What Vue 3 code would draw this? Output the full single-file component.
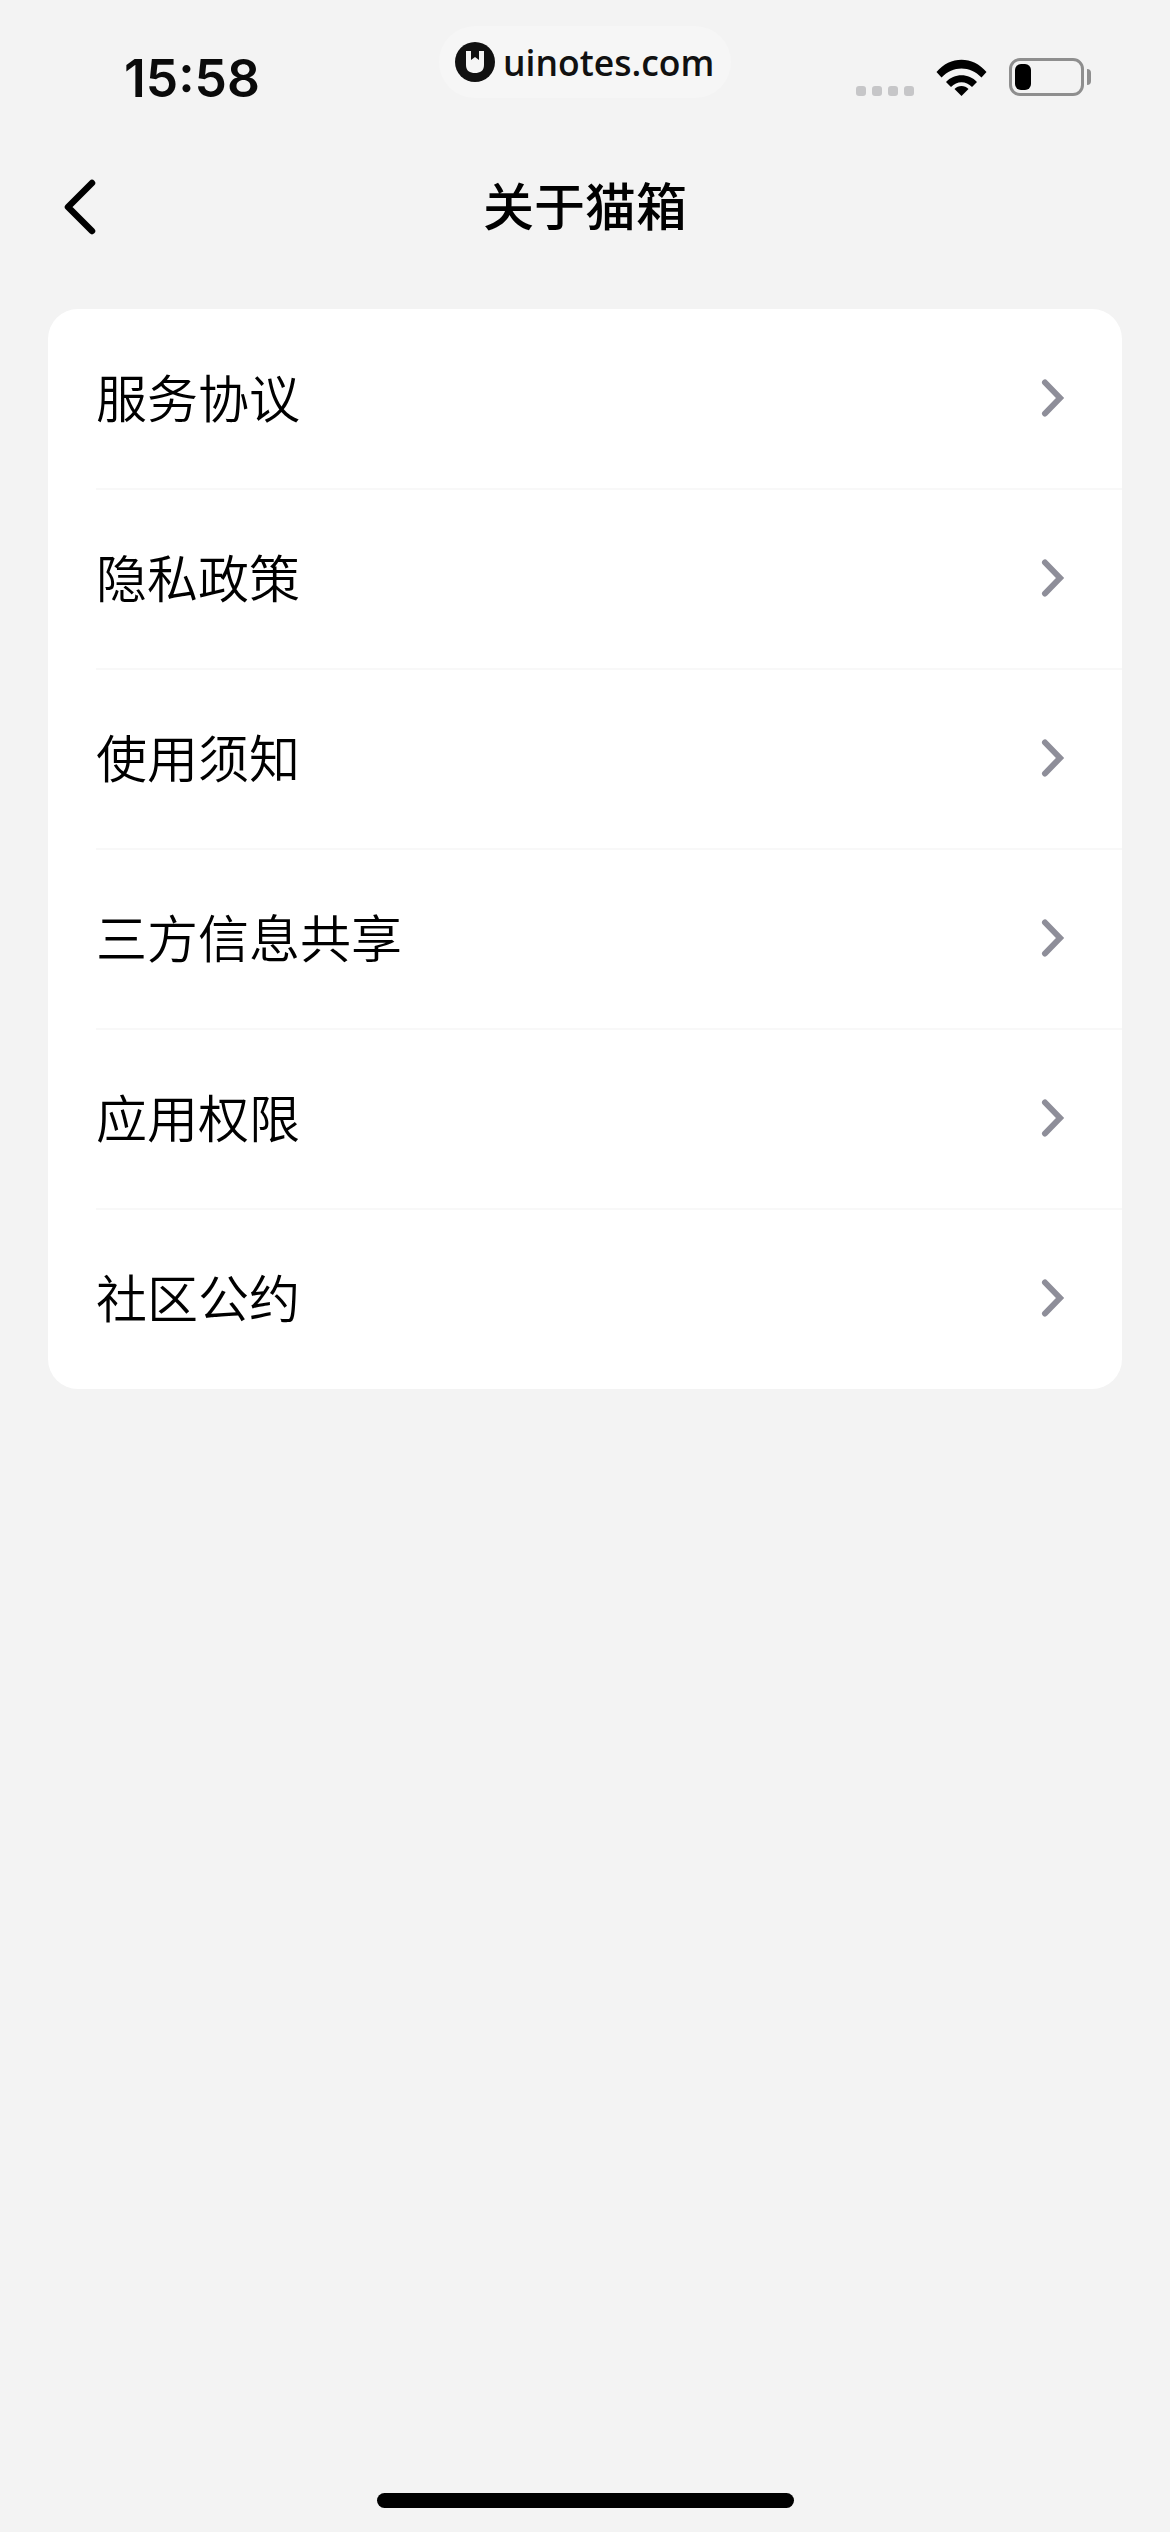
<script setup>
const rows = ['服务协议', '隐私政策', '使用须知', '三方信息共享', '应用权限', '社区公约']
</script>

<template>
  <div class="page">
    <header class="status">
      <span class="time">15:58</span>
      <div class="indicators">
        <div class="signal"><i v-for="n in 4" :key="n"></i></div>
        <svg class="wifi" width="51" height="37" viewBox="0 0 51 37">
          <path d="M0.5 13 C14 -3.5 37 -3.5 50.5 13 L45.5 18.5 C34 6.5 17 6.5 5.5 18.5 Z" />
          <path d="M10 23 C18 14 33 14 41 23 L36 28 C30 21.500 21 21.500 15 28 Z" />
          <path d="M18.500 30 C22 26 29 26 32.500 30 L25.500 37 Z" />
        </svg>
        <div class="battery">
          <div class="shell"><div class="level"></div></div>
          <div class="nub"></div>
        </div>
      </div>
      <div class="pill">
        <svg class="logo" width="40" height="40" viewBox="0 0 40 40">
          <circle cx="20" cy="20" r="20" fill="#111" />
          <path d="M11 9 H16 V18 L20 15 L24 18 V9 H29 V23 C29 29 25 31 20 31 C15 31 11 29 11 23 Z" fill="#f5f5f5" />
        </svg>
        <span class="brand">uinotes.com</span>
      </div>
    </header>

    <nav class="nav">
      <svg class="back" width="34" height="56" viewBox="0 0 34 56">
        <path d="M29 4 L5 28 L29 52" />
      </svg>
      <h1 class="title">关于猫箱</h1>
    </nav>

    <main class="card">
      <div v-for="label in rows" :key="label" class="row">
        <span class="label">{{ label }}</span>
        <svg class="chevron" width="26" height="44" viewBox="0 0 26 44">
          <path d="M4 6.500 L19 22 L4 37.500" />
        </svg>
      </div>
    </main>

    <div class="home"></div>
  </div>
</template>

<style>
html, body { margin: 0; background: #f3f3f3; }
</style>

<style scoped>
.page {
  position: relative;
  width: 1170px;
  height: 2532px;
  overflow: hidden;
  display: flex;
  flex-direction: column;
  background: #f3f3f3;
  color: #000;
  font-family: "Noto Sans CJK SC", "Noto Sans", sans-serif;
}
.status {
  position: relative;
  height: 140px;
  flex: none;
  display: flex;
  justify-content: space-between;
  align-items: flex-start;
  padding: 0 79px 0 124px;
  box-sizing: border-box;
}
.time {
  margin-top: 46px;
  font-family: Inter, sans-serif;
  font-weight: 600;
  font-size: 51.500px;
  line-height: 64px;
  color: #0a0a0a;
}
.indicators {
  display: flex;
  align-items: flex-start;
  margin-top: 59px;
}
.signal {
  display: flex;
  gap: 6px;
  margin-top: 27px;
  margin-right: 22px;
}
.signal i {
  width: 10px;
  height: 10px;
  border-radius: 3px;
  background: #c6c6c8;
}
.wifi {
  margin-top: 0;
  margin-right: 22px;
  fill: #000;
}
.battery {
  display: flex;
  align-items: center;
  gap: 3px;
  margin-top: -1px;
}
.shell {
  width: 75px;
  height: 38px;
  box-sizing: border-box;
  border: 3px solid #8e8e8e;
  border-radius: 11px;
  padding: 3px;
}
.level {
  width: 16px;
  height: 100%;
  border-radius: 6px;
  background: #000;
}
.nub {
  width: 4px;
  height: 16px;
  border-radius: 0 4px 4px 0;
  background: #8e8e8e;
}
.pill {
  position: absolute;
  left: 439px;
  top: 26px;
  width: 292px;
  height: 72px;
  box-sizing: border-box;
  padding-left: 16px;
  display: flex;
  align-items: center;
  gap: 8px;
  border-radius: 36px;
  background: #f6f6f6;
}
.logo { flex: none; }
.brand {
  font-family: "Open Sans", sans-serif;
  font-weight: 600;
  font-size: 35.500px;
  line-height: 44px;
  color: #111;
  white-space: nowrap;
}
.nav {
  position: relative;
  height: 134px;
  flex: none;
  display: flex;
  align-items: center;
  justify-content: center;
}
.back {
  position: absolute;
  left: 63px;
  top: 39px;
  fill: none;
  stroke: #000;
  stroke-width: 6.500;
  stroke-linecap: round;
  stroke-linejoin: round;
}
.title {
  margin: 0 0 6px;
  font-size: 51px;
  font-weight: 500;
  line-height: 72px;
}
.card {
  margin: 35px 48px 0;
  border-radius: 30px;
  background: #fff;
  overflow: hidden;
  flex: none;
}
.row {
  position: relative;
  height: 180px;
  display: flex;
  align-items: center;
  justify-content: space-between;
  padding: 0 55px 0 48px;
  box-sizing: border-box;
}
.row + .row::before {
  content: "";
  position: absolute;
  left: 48px;
  right: 0;
  top: -1px;
  height: 2px;
  background: #f8f8f8;
}
.label {
  margin-bottom: 6px;
  font-size: 51px;
  font-weight: 350;
  line-height: 72px;
  color: #000;
}
.chevron {
  margin-bottom: 2px;
  fill: none;
  stroke: #8e8e99;
  stroke-width: 6;
  stroke-linecap: round;
  stroke-linejoin: miter;
}
.home {
  position: absolute;
  left: 377px;
  bottom: 24px;
  width: 417px;
  height: 15px;
  border-radius: 8px;
  background: #000;
}
</style>
